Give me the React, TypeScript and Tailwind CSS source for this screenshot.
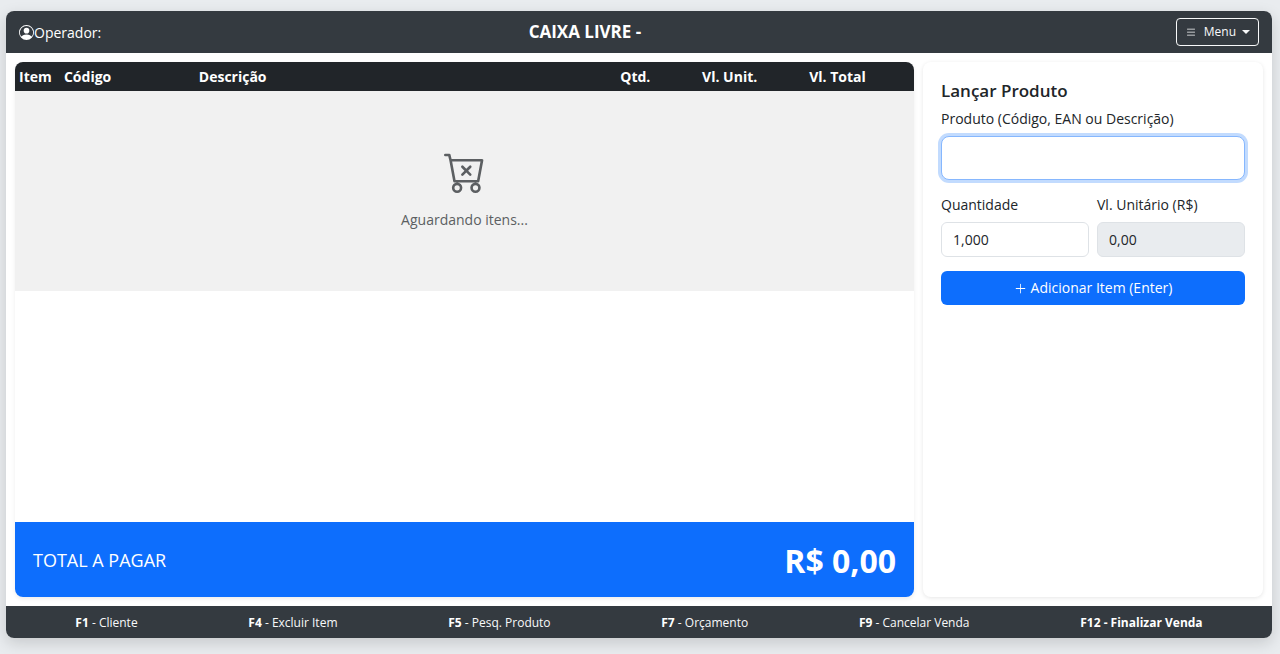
import React, { useState } from 'react';
import { BsCartX, BsList, BsPersonCircle, BsPlusLg } from 'react-icons/bs';

interface Shortcut {
  keyName: string;
  label: string;
  strong?: boolean;
}

const shortcuts: Shortcut[] = [
  { keyName: 'F1', label: 'Cliente' },
  { keyName: 'F4', label: 'Excluir Item' },
  { keyName: 'F5', label: 'Pesq. Produto' },
  { keyName: 'F7', label: 'Orçamento' },
  { keyName: 'F9', label: 'Cancelar Venda' },
  { keyName: 'F12', label: 'Finalizar Venda', strong: true },
];

function Header() {
  return (
    <header className="grid h-[42px] shrink-0 grid-cols-[minmax(0,509fr)_auto_minmax(0,617fr)] items-center bg-[#343a40] px-[13px] text-white">
      <div className="flex items-center text-[14px]">
        <BsPersonCircle className="size-[15px]" />
        <span>Operador:</span>
      </div>
      <h1 className="text-[17px] font-bold">CAIXA LIVRE -</h1>
      <button
        type="button"
        aria-haspopup="menu"
        className="flex h-7 items-center justify-self-end rounded border border-[#f8f9fa] px-2 text-[12px] text-[#f8f9fa]"
      >
        <BsList className="mr-[7px] size-3" />
        Menu
        <span className="ml-[6px] border-x-4 border-t-4 border-x-transparent border-t-current" />
      </button>
    </header>
  );
}

function ItemsPanel() {
  return (
    <section className="flex min-w-0 flex-1 flex-col overflow-hidden rounded-lg bg-white shadow-[0_2px_4px_rgba(0,0,0,0.075)]">
      <div className="min-h-0 flex-1">
        <table className="w-full table-fixed border-collapse text-[14px]">
          <colgroup>
            <col className="w-[5%]" />
            <col className="w-[15%]" />
            <col className="w-[45%]" />
            <col className="w-[8%]" />
            <col className="w-[13%]" />
            <col className="w-[11%]" />
            <col className="w-[3%]" />
          </colgroup>
          <thead className="bg-[#212529] text-white">
            <tr className="h-[29px] whitespace-nowrap">
              <th className="px-1 text-left font-bold">Item</th>
              <th className="px-1 text-left font-bold">Código</th>
              <th className="px-1 text-left font-bold">Descrição</th>
              <th className="px-1 text-center font-bold">Qtd.</th>
              <th className="px-1 text-center font-bold">Vl. Unit.</th>
              <th className="px-1 text-center font-bold">Vl. Total</th>
              <td />
            </tr>
          </thead>
          <tbody>
            <tr className="h-[200px] bg-[#f1f1f1] text-[#5c5f62]">
              <td colSpan={7} className="pb-[2px] text-center align-middle">
                <BsCartX className="mx-auto mb-4 size-[42px]" />
                Aguardando itens...
              </td>
            </tr>
          </tbody>
        </table>
      </div>
      <div className="flex h-[75px] shrink-0 items-center justify-between bg-[#0d6efd] px-[18px] pt-[2px] text-white">
        <span className="text-[18px]">TOTAL A PAGAR</span>
        <span className="text-[32px] font-bold">R$ 0,00</span>
      </div>
    </section>
  );
}

function ProductForm() {
  const [product, setProduct] = useState('');
  const [quantity, setQuantity] = useState('1,000');

  return (
    <form
      onSubmit={e => e.preventDefault()}
      className="w-[340px] shrink-0 rounded-lg bg-white p-[18px] text-[14px] leading-[22px] text-[#212529] shadow-[0_1px_4px_rgba(0,0,0,0.1)]"
    >
      <h2 className="mb-[6px] text-[17px] font-semibold leading-[22px]">Lançar Produto</h2>
      <label htmlFor="product" className="mb-[6px] block">Produto (Código, EAN ou Descrição)</label>
      <input
        id="product"
        type="text"
        autoComplete="off"
        value={product}
        onChange={e => setProduct(e.target.value)}
        className="mb-[14px] block h-11 w-full rounded-lg border border-[#86b7fe] bg-white px-4 text-[18px] shadow-[0_0_0_3px_rgba(13,110,253,0.25)] outline-none"
      />
      <div className="mb-[14px] grid grid-cols-2 gap-2">
        <div>
          <label htmlFor="quantity" className="mb-[6px] block">Quantidade</label>
          <input
            id="quantity"
            type="text"
            value={quantity}
            onChange={e => setQuantity(e.target.value)}
            className="block h-[35px] w-full rounded-md border border-[#dee2e6] bg-white px-[11px]"
          />
        </div>
        <div>
          <label htmlFor="price" className="mb-[6px] block">Vl. Unitário (R$)</label>
          <input
            id="price"
            type="text"
            readOnly
            value="0,00"
            className="block h-[35px] w-full rounded-md border border-[#dee2e6] bg-[#e9ecef] px-[11px]"
          />
        </div>
      </div>
      <button
        type="submit"
        className="flex h-[34px] w-full items-center justify-center gap-1 rounded-md bg-[#0d6efd] text-white"
      >
        <BsPlusLg className="size-[13px]" />
        Adicionar Item (Enter)
      </button>
    </form>
  );
}

function Footer() {
  return (
    <footer className="flex h-8 shrink-0 items-center justify-around bg-[#343a40] px-[14px] pt-[2px] text-[12px] text-[#f8f9fa]">
      {shortcuts.map(({ keyName, label, strong }) => (
        <span key={keyName} className={strong ? 'font-bold text-white' : ''}>
          <strong className="font-bold text-white">{keyName}</strong>
          {` - ${label}`}
        </span>
      ))}
    </footer>
  );
}

export default function App() {
  return (
    <div className="flex h-screen flex-col bg-[#e9ecef] px-2 pt-[11px] pb-4 pl-[6px] font-['Open_Sans','Noto_Sans',sans-serif]">
      <div className="flex min-h-0 flex-1 flex-col overflow-hidden rounded-lg bg-white shadow-[0_5px_15px_rgba(0,0,0,0.15)]">
        <Header />
        <main className="flex min-h-0 flex-1 gap-[9px] p-[9px]">
          <ItemsPanel />
          <ProductForm />
        </main>
        <Footer />
      </div>
    </div>
  );
}
